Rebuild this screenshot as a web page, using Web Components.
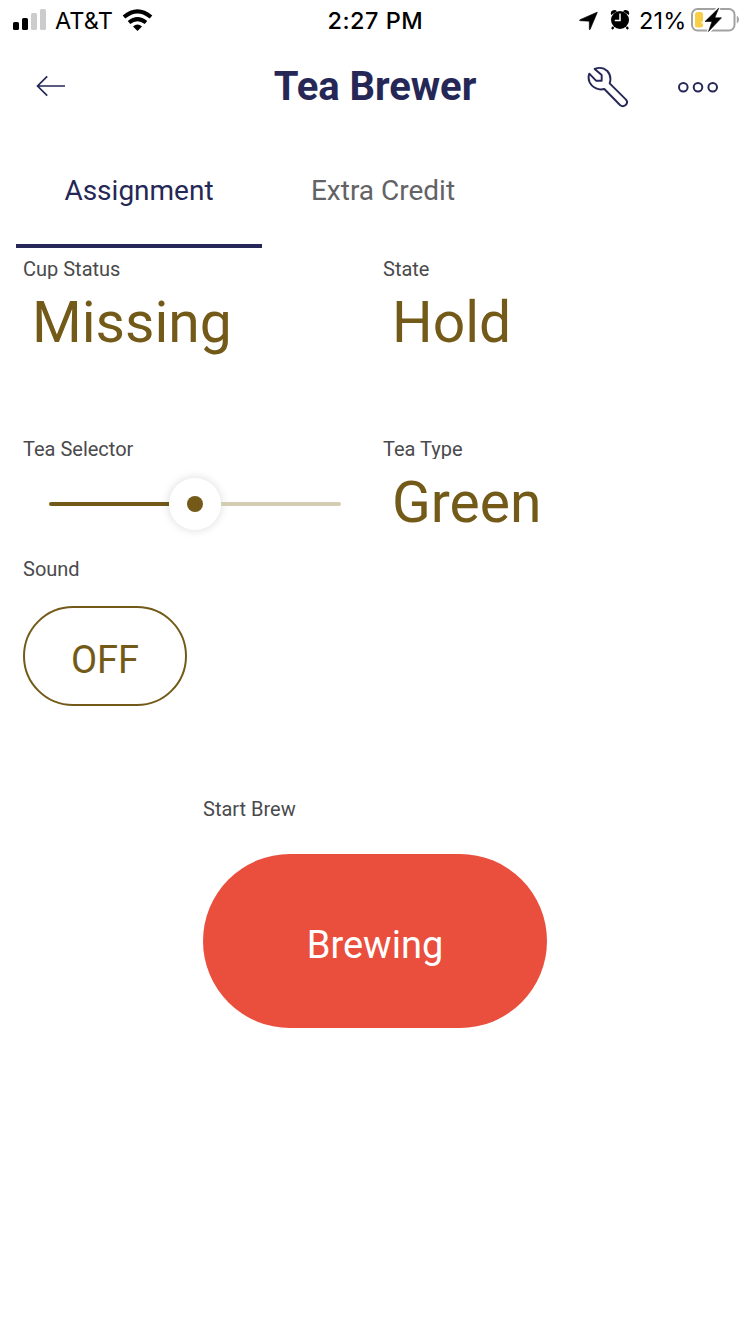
<!DOCTYPE html>
<html lang="en">
<head>
<meta charset="utf-8">
<title>Tea Brewer</title>
<style>
  html, body { margin: 0; background: #fff; }
  body { width: 750px; height: 1334px; overflow: hidden; font-family: Roboto, "Liberation Sans", sans-serif;
    --navy: #252856; --gold: #735a18; --red: #ea4e3d; }
</style>
</head>
<body>
<tea-app></tea-app>
<script>
const define = (name, html) => customElements.define(name, class extends HTMLElement {
  constructor() {
    super();
    const t = document.createElement('template');
    t.innerHTML = html;
    this.attachShadow({ mode: 'open' }).append(t.content.cloneNode(true));
  }
});

define('status-bar', `
<style>
  :host { display: grid; grid-template-columns: 1fr auto 1fr; grid-template-rows: 40px; align-items: center; height: 40px; box-sizing: border-box;
    padding: 0 10px; font: 23.5px/40px Inter, "Liberation Sans", sans-serif; color: #000; }
  .side { display: flex; align-items: center; height: 40px; }
  .left { padding-left: 3px; }
  .right { justify-content: flex-end; }
  .time { box-sizing: border-box; height: 40px; font-weight: 500; letter-spacing: .5px; width: 95px; white-space: nowrap; padding-top: 1px; }
  .carrier { margin: 1px 0 0 8px; width: 58px; letter-spacing: .1px; white-space: nowrap; }
  .pct { width: 47px; margin: 1px 4px 0 10px; letter-spacing: .2px; white-space: nowrap; text-indent: -1px; }
  svg { display: block; flex: none; }
</style>
<div class="side left">
  <svg width="34" height="40"><rect y="22" width="6" height="8" rx="1.6"/><rect x="9" y="18" width="6" height="12" rx="1.6"/><g fill="#ccc"><rect x="18" y="13" width="6" height="17" rx="1.6"/><rect x="27" y="9" width="6" height="21" rx="1.6"/></g></svg>
  <span class="carrier">AT&amp;T</span>
  <svg style="margin-left:9px" width="32" height="40" viewBox="122 0 32 40" fill="none" stroke="#000" stroke-width="4"><path d="M124 17.1Q137.500 5.500 151 17.1M129 22.500Q137.500 15.800 146 22.500"/><path d="M133 26.500Q137.500 22.700 142 26.500L137.500 31Z" fill="#000" stroke="none"/></svg>
</div>
<div class="time">2:27 PM</div>
<div class="side right">
  <svg width="19" height="40" viewBox="579 0 19 40"><path d="M596.900 12.300Q597.500 11.800 597.100 12.900L590.200 29.200Q589.500 30.500 589.300 29V21.200L580.300 20.700Q578.800 20.500 580 19.700Z" stroke="#000" stroke-width=".6"/></svg>
  <svg style="margin-left:12px" width="20" height="40" viewBox="610 0 20 40"><circle cx="620" cy="20" r="9"/><path d="M613.500 27 611.900 29M626.500 27 628.100 29" stroke="#000" stroke-width="2.200"/><path d="M611.200 15Q610 12 612.500 10.500 615 9 617 11.200ZM628.800 15Q630 12 627.500 10.500 625 9 623 11.200Z"/><path d="M620 13.500V20.500H614.800" fill="none" stroke="#fff" stroke-width="1.500"/></svg>
  <span class="pct">21%</span>
  <svg width="49" height="40" viewBox="691 0 49 40"><rect x="692" y="9" width="42.500" height="21.500" rx="5.500" fill="none" stroke="#a2a2a2" stroke-width="2"/><rect x="695" y="12" width="8" height="15.500" rx="2.500" fill="#f7ce46"/><path d="M736.800 15.500Q739 17 739 19.500T736.800 23.500Z" fill="#a2a2a2"/><path d="M718.800 8 705 21.500H712L708.500 31.500 721.500 17.800H714.800Z" stroke="#fff" stroke-width="3.500"/><path d="M718.800 8 705 21.500H712L708.500 31.500 721.500 17.800H714.800Z" stroke="#000" stroke-width=".6"/></svg>
</div>`);

define('nav-bar', `
<style>
  :host { display: grid; grid-template-columns: 1fr auto 1fr; height: 92px; padding: 0 30px; align-items: start; color: var(--navy); }
  h1 { margin: 0; padding-top: 23px; font: 700 40px/48px Roboto, sans-serif; white-space: nowrap; letter-spacing: -.05px; }
  .back { margin-left: 6px; }
  .actions { display: flex; justify-content: flex-end; gap: 48px; padding-top: 26px; }
  svg { display: block; fill: none; stroke: currentColor; flex: none; }
</style>
<svg class="back" width="30" height="92" viewBox="36 40 30 92" stroke-width="1.700"><path d="M65 86H37.500M47.200 76.300 37.500 86 47.200 95.700"/></svg>
<h1><slot></slot></h1>
<div class="actions">
  <svg width="42" height="42" viewBox="81 198 126 126" stroke-width="5.800" stroke-linejoin="round"><path d="M104 207Q126 198 142 213 156 229 149 250L198 299Q205 307 197 315 188 322 180 315L133 267Q112 272 96 257 81 241 88 221L108 242H125V225Z"/></svg>
  <svg width="43" height="42" viewBox="677 66 43 42" stroke-width="2"><circle cx="683.300" cy="87.300" r="4.300"/><circle cx="698" cy="87.300" r="4.300"/><circle cx="712.700" cy="87.300" r="4.300"/></svg>
</div>`);

define('tab-item', `
<style>
  :host { display: block; box-sizing: border-box; width: 246px; height: 116px; padding-top: 42px; text-align: center;
    font-size: 28px; line-height: 33px; color: #636366; border-bottom: 4px solid transparent; }
  :host([selected]) { color: var(--navy); border-color: var(--navy); }
</style><slot></slot>`);

define('tab-bar', `<style>:host { display: flex; padding-left: 16px; }</style><slot></slot>`);

define('dash-widget', `
<style>
  :host { display: block; padding: 11px 8px 0; box-sizing: border-box; min-width: 0; }
  .label { height: 20px; clip-path: inset(-4px 0 0 -2px); font-size: 20px; line-height: 20px; color: #4a4a4c; white-space: nowrap; }
</style><div class="label"></div><slot></slot>`);

define('value-text', `
<style>:host { display: block; padding: 10px 0 0 9px; font-size: 57px; line-height: 68px; color: var(--gold); white-space: nowrap; }</style><slot></slot>`);

define('tea-slider', `
<style>
  :host { display: flex; align-items: center; height: 52px; margin: 19px 26px 0; }
  .on, .off { flex: 1; height: 4px; background: var(--gold); border-radius: 2px 0 0 2px; }
  .off { background: #d5ccb4; border-radius: 0 2px 2px 0; }
  .knob { display: grid; place-items: center; width: 52px; height: 52px; border-radius: 50%; background: #fff; box-shadow: 0 0 10px rgba(0,0,0,.15); }
  .dot { width: 16px; height: 16px; border-radius: 50%; background: var(--gold); }
</style><div class="on"></div><div class="knob"><div class="dot"></div></div><div class="off"></div>`);

define('pill-button', `
<style>
  :host { display: flex; justify-content: center; align-items: center; box-sizing: border-box; font-size: 38px; line-height: 46px;
    width: 164px; height: 100px; margin-top: 27px; padding-top: 7px; border: 2px solid var(--gold); border-radius: 50px; color: var(--gold); }
  :host([filled]) { width: 344px; height: 174px; margin-top: 35px; padding-top: 7px; border: 0; border-radius: 87px; background: var(--red); color: #fff; }
</style><slot></slot>`);

define('widget-grid', `
<style>
  :host { display: grid; grid-template-columns: repeat(12, 60px); grid-auto-rows: 60px; padding: 0 15px; }
  ::slotted(.r1) { grid-row: 1 / span 3; }
  ::slotted(.r2) { grid-row: 4 / span 2; }
  ::slotted(.r3) { grid-row: 6 / span 3; }
  ::slotted(.r4) { grid-row: 10 / span 4; }
  ::slotted(.left) { grid-column: 1 / span 6; }
  ::slotted(.right) { grid-column: 7 / span 6; }
  ::slotted(.mid) { grid-column: 4 / span 6; }
</style><slot></slot>`);

define('tea-app', `
<style>:host { display: flex; flex-direction: column; height: 1334px; }</style>
<status-bar></status-bar>
<nav-bar>Tea Brewer</nav-bar>
<tab-bar><tab-item selected>Assignment</tab-item><tab-item style="width:242px">Extra Credit</tab-item></tab-bar>
<widget-grid>
  <dash-widget class="r1 left" label="Cup Status"><value-text>Missing</value-text></dash-widget>
  <dash-widget class="r1 right" label="State"><value-text>Hold</value-text></dash-widget>
  <dash-widget class="r2 left" label="Tea Selector"><tea-slider></tea-slider></dash-widget>
  <dash-widget class="r2 right" label="Tea Type"><value-text>Green</value-text></dash-widget>
  <dash-widget class="r3 left" label="Sound"><pill-button>OFF</pill-button></dash-widget>
  <dash-widget class="r4 mid" label="Start Brew"><pill-button filled>Brewing</pill-button></dash-widget>
</widget-grid>`);

// Copy each widget's label attribute into its heading.
document.querySelector('tea-app').shadowRoot.querySelectorAll('dash-widget').forEach(w => {
  w.shadowRoot.querySelector('.label').textContent = w.getAttribute('label');
});
</script>
</body>
</html>
